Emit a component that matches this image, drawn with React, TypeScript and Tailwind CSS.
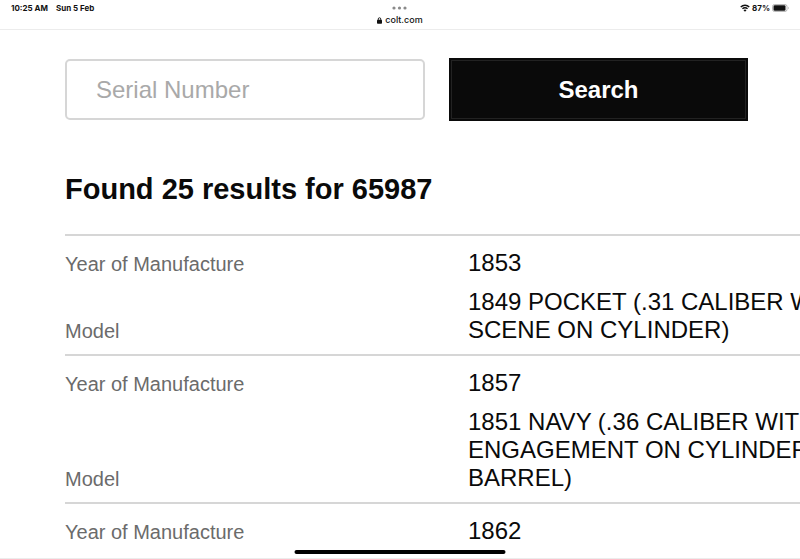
import { useState, FormEvent } from "react";

type ResultType = {
  id: number;
  year: string;
  model?: string;
};

const results: ResultType[] = [
  { id: 1, year: "1853", model: "1849 POCKET (.31 CALIBER WITH SCENE ON CYLINDER)" },
  { id: 2, year: "1857", model: "1851 NAVY (.36 CALIBER WITH ENGAGEMENT ON CYLINDER, BARREL)" },
  { id: 3, year: "1862" },
];

function LockIcon() {
  return (
    <svg width="5" height="7" viewBox="0 0 10 14" aria-hidden="true">
      <path d="M2.5 7V4a2.5 2.5 0 0 1 5 0v3" fill="none" stroke="#111" strokeWidth="1.8" />
      <rect x="0" y="5.5" width="10" height="8" rx="1.5" fill="#111" />
    </svg>
  );
}

function WifiIcon() {
  return (
    <svg width="10" height="8" viewBox="0 0 20 16" fill="none" stroke="#111" strokeWidth="2.8" aria-hidden="true">
      <path d="M1.5 6a12 12 0 0 1 17 0" />
      <path d="M4.9 9.5a7.2 7.2 0 0 1 10.2 0" />
      <path d="M10 15.5 7 12.4a4.3 4.3 0 0 1 6 0Z" fill="#111" stroke="none" />
    </svg>
  );
}

function BatteryIcon() {
  return (
    <svg width="17" height="8" viewBox="0 0 34 16" aria-hidden="true">
      <rect x="1" y="1" width="29" height="14" rx="4" fill="none" stroke="#a3a3a3" strokeWidth="1.5" />
      <rect x="3" y="2.5" width="24" height="11" rx="2.5" fill="#111" />
      <path d="M32 5.5c1.6.5 1.6 4.5 0 5Z" fill="#a3a3a3" />
    </svg>
  );
}

function StatusBar() {
  return (
    <header className="grid h-[30px] grid-cols-3 items-start border-b border-[#ececec] px-[11px] pt-[3px] font-[Inter,sans-serif] text-[8px] leading-[10px] font-bold text-[#111]">
      <div className="flex gap-2">
        <span>10:25 AM</span>
        <span>Sun 5 Feb</span>
      </div>
      <div className="flex flex-col items-center gap-[2px]">
        <svg width="15" height="10" viewBox="0 0 15 10" fill="#8a8a8a" aria-hidden="true">
          <circle cx="2" cy="5" r="1.6" />
          <circle cx="7.5" cy="5" r="1.6" />
          <circle cx="13" cy="5" r="1.6" />
        </svg>
        <div className="flex items-center gap-[3px] text-[9px] font-medium">
          <LockIcon />
          <span>colt.com</span>
        </div>
      </div>
      <div className="flex items-center justify-end gap-[2px]">
        <WifiIcon />
        <span>87%</span>
        <BatteryIcon />
      </div>
    </header>
  );
}

export default function App() {
  const [serial, setSerial] = useState("");

  const handleSearch = (event: FormEvent<HTMLFormElement>) => {
    event.preventDefault();
  };

  return (
    <div className="relative flex h-screen flex-col overflow-hidden border-b border-[#ececec] bg-white font-['Liberation_Sans',Arial,sans-serif] text-[#0a0a0a]">
      <StatusBar />

      <main className="min-h-0 flex-1 overflow-hidden pt-7 pl-[65px]">
        <form onSubmit={handleSearch} className="grid grid-cols-[360fr_299fr] items-center gap-6 pr-[52px]">
          <input
            type="text"
            aria-label="Serial Number"
            placeholder="Serial Number"
            value={serial}
            onChange={(e) => setSerial(e.target.value)}
            className="h-[61px] w-full min-w-0 rounded-[5px] border-2 border-[#d6d6d6] px-[29px] text-2xl placeholder:text-[#a9a9a9]"
          />
          <button
            type="submit"
            className="h-[63px] border-2 border-[#0a0a0a] bg-[#0a0a0a] text-2xl font-bold text-white inset-ring inset-ring-[#222]"
          >
            Search
          </button>
        </form>

        <h1 className="mt-[50px] mb-[27px] text-[29px] leading-9 font-bold">Found 25 results for 65987</h1>

        {results.map((result) => (
          <table key={result.id} className="w-[833px] table-fixed border-t-2 border-[#d6d6d6]">
            <tbody>
              <tr className="align-bottom">
                <th scope="row" className="w-[403px] pt-[13px] text-left text-xl leading-[26px] font-normal text-[#6b6b6b]">
                  Year of Manufacture
                </th>
                <td className="pt-[13px] text-2xl leading-7">{result.year}</td>
              </tr>
              {result.model && (
                <tr className="align-bottom">
                  <th scope="row" className="pb-[10px] text-left text-xl leading-[26px] font-normal text-[#6b6b6b]">
                    Model
                  </th>
                  <td className="pt-[11px] pb-[10px] text-2xl leading-7">{result.model}</td>
                </tr>
              )}
            </tbody>
          </table>
        ))}
      </main>

      {/* home indicator */}
      <div className="absolute bottom-1 left-1/2 h-1 w-[211px] -translate-x-1/2 rounded-full bg-black" />
    </div>
  );
}
